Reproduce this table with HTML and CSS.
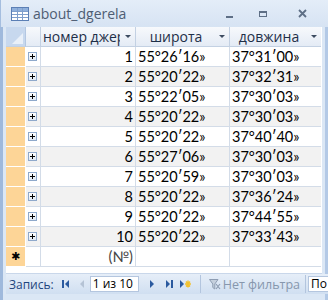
FILE: index.html
```html
<!DOCTYPE html>
<html>
<head>
<meta charset="utf-8">
<link rel="stylesheet" href="styles.css">
</head>
<body>
<div class="win">
  <div class="titlebar">
    <svg class="ticon" width="18" height="14" viewBox="0 0 18 14">
      <rect x="0.5" y="0.5" width="17" height="13" fill="#fff" stroke="#5b7fb5"/>
      <rect x="1" y="1" width="16" height="3" fill="#8fb0dc"/>
      <path d="M1 4.5H17M1 7.5H17M1 10.5H17M6.5 1V13M11.5 1V13" stroke="#7f9fcc" fill="none"/>
    </svg>
    <span class="title">about_dgerela</span>
    <div class="controls">
      <span class="ctl min"></span>
      <span class="ctl max"></span>
      <svg class="ctl-x" width="9" height="9" viewBox="0 0 9 9"><path d="M1 1L8 8M8 1L1 8" stroke="#5e6f86" stroke-width="1.8"/></svg>
    </div>
  </div>
  <div class="frame">
    <div class="grid">
      <div class="hcell selall"><span class="tri"></span></div>
      <div class="hcell hexp"></div>
      <div class="hcell col"><span class="htext left">номер джерела</span><span class="arr"></span></div>
      <div class="hcell col"><span class="htext">широта</span><span class="arr"></span></div>
      <div class="hcell col last"><span class="htext">довжина</span><span class="arr"></span></div>

      <div class="sel"></div><div class="exp"><span class="plus"></span></div><div class="num">1</div><div class="c">55°26′16»</div><div class="c last">37°31′00»</div>
      <div class="sel"></div><div class="exp alt"><span class="plus"></span></div><div class="num alt">2</div><div class="c alt">55°20′22»</div><div class="c alt last">37°32′31»</div>
      <div class="sel"></div><div class="exp"><span class="plus"></span></div><div class="num">3</div><div class="c">55°22′05»</div><div class="c last">37°30′03»</div>
      <div class="sel"></div><div class="exp alt"><span class="plus"></span></div><div class="num alt">4</div><div class="c alt">55°20′22»</div><div class="c alt last">37°30′03»</div>
      <div class="sel"></div><div class="exp"><span class="plus"></span></div><div class="num">5</div><div class="c">55°20′22»</div><div class="c last">37°40′40»</div>
      <div class="sel"></div><div class="exp alt"><span class="plus"></span></div><div class="num alt">6</div><div class="c alt">55°27′06»</div><div class="c alt last">37°30′03»</div>
      <div class="sel"></div><div class="exp"><span class="plus"></span></div><div class="num">7</div><div class="c">55°20′59»</div><div class="c last">37°30′03»</div>
      <div class="sel"></div><div class="exp alt"><span class="plus"></span></div><div class="num alt">8</div><div class="c alt">55°20′22»</div><div class="c alt last">37°36′24»</div>
      <div class="sel"></div><div class="exp"><span class="plus"></span></div><div class="num">9</div><div class="c">55°20′22»</div><div class="c last">37°44′55»</div>
      <div class="sel"></div><div class="exp alt"><span class="plus"></span></div><div class="num alt">10</div><div class="c alt">55°20′22»</div><div class="c alt last">37°33′43»</div>
      <div class="sel star">✱</div><div class="exp"></div><div class="num newrec">(№)</div><div class="c"></div><div class="c last"></div>
    </div>
    <div class="filler"></div>
    <div class="status">
      <span class="lbl">Запись:</span>
      <svg class="nav first" width="7" height="8" viewBox="0 0 7 8"><rect x="0" y="0" width="2" height="8" fill="#2b5a9f"/><path d="M7 0V8L3 4Z" fill="#2b5a9f"/></svg>
      <svg class="nav prev" width="4" height="8" viewBox="0 0 4 8"><path d="M4 0V8L0 4Z" fill="#b5c3d5"/></svg>
      <span class="pos">1 из 10</span>
      <svg class="nav next" width="4" height="8" viewBox="0 0 4 8"><path d="M0 0V8L4 4Z" fill="#2b5a9f"/></svg>
      <svg class="nav last" width="7" height="8" viewBox="0 0 7 8"><path d="M0 0V8L4 4Z" fill="#2b5a9f"/><rect x="5" y="0" width="2" height="8" fill="#2b5a9f"/></svg>
      <svg class="nav newr" width="11" height="8" viewBox="0 0 11 8"><path d="M0 0V8L4 4Z" fill="#2b5a9f"/><path d="M8 0.5V7.5M5 4H11M6 1.5L10 6.5M10 1.5L6 6.5" stroke="#f2c230" stroke-width="1.4"/></svg>
      <span class="sep"></span>
      <svg class="filt" width="12" height="11" viewBox="0 0 12 11"><path d="M0.5 0.5H9L5.8 5V10L3.8 8.5V5Z" fill="#c5d0dd" stroke="#8e9db2"/><path d="M7 5L11 10M11 5L7 10" stroke="#8e9db2" stroke-width="1.2"/></svg>
      <span class="nofilt">Нет фильтра</span>
      <span class="sep two"></span>
      <span class="search">По</span>
    </div>
  </div>
</div>
</body>
</html>
```

FILE: styles.css
```css
html, body {
  margin: 0;
  padding: 0;
  width: 328px;
  height: 300px;
  overflow: hidden;
  background: #fff;
}
.win {
  width: 328px;
  height: 300px;
  display: flex;
  flex-direction: column;
  background: #d7e4f3;
}
.titlebar {
  height: 27px;
  display: flex;
  align-items: center;
  background: linear-gradient(#e4edf8, #d6e3f3);
  border-left: 1px solid #a5bedf;
  box-sizing: border-box;
}
.ticon {
  margin-left: 10px;
  margin-top: 1px;
  flex: none;
}
.title {
  margin-left: 4px;
  font-family: "Open Sans", sans-serif;
  font-size: 14px;
  color: #4e5d73;
  white-space: nowrap;
}
.controls {
  margin-left: auto;
  display: flex;
  align-items: center;
  margin-right: 21px;
}
.ctl.min {
  width: 7px;
  height: 2px;
  background: #5e6f86;
  margin-top: 7px;
  margin-right: 26px;
}
.ctl.max {
  width: 8px;
  height: 6px;
  box-sizing: border-box;
  border: 1px solid #5e6f86;
  border-top-width: 2px;
  margin-right: 31px;
}
.frame {
  flex: 1;
  display: flex;
  flex-direction: column;
  padding: 0 6px 6px 6px;
  background: linear-gradient(90deg, #9fb9dc 0, #9fb9dc 3px, #dbe7f5 3px, #dbe7f5 325px, #b3c9e6 325px);
}
.grid {
  display: grid;
  grid-template-columns: 20px 15px 95px 94px 91px;
  grid-auto-rows: 20px;
  background: #fff;
  font-family: "Lato", "Liberation Sans", sans-serif;
  font-size: 14.5px;
  color: #000;
}
.grid > div {
  box-sizing: border-box;
  border-bottom: 1px solid #d3dce8;
  border-right: 1px solid #d3dce8;
  display: flex;
  align-items: center;
  white-space: nowrap;
  overflow: hidden;
}
.grid > div.last {
  border-right: none;
}
.hcell {
  background: linear-gradient(#f7f9fc, #e4ebf5);
  border-color: #c3d1e3 !important;
  font-family: "Open Sans", sans-serif;
  font-size: 14px;
  color: #1e2f48;
}
.hcell.selall {
  background: #c7d8ee;
  position: relative;
  border-right-color: #b3c7e2 !important;
}
.tri {
  position: absolute;
  right: 2px;
  bottom: 2px;
  width: 0;
  height: 0;
  border-left: 11px solid transparent;
  border-bottom: 11px solid #e9f0f9;
}
.hcell.col {
  padding: 0 4px 0 2px;
}
.htext {
  flex: 1;
  text-align: center;
  overflow: hidden;
  white-space: nowrap;
}
.htext.left {
  text-align: left;
  padding-left: 0;
}
.arr {
  width: 0;
  height: 0;
  border-left: 3px solid transparent;
  border-right: 3px solid transparent;
  border-top: 3px solid #3c4b60;
  margin-left: 5px;
  flex: none;
}
.sel {
  background: #fdd597;
  border-bottom-color: #fff !important;
  border-right-color: #ffffff !important;
}
.sel.star {
  justify-content: center;
  font-size: 11px;
  font-family: "DejaVu Sans", sans-serif;
}
.exp {
  justify-content: center;
}
.plus {
  width: 9px;
  height: 9px;
  box-sizing: border-box;
  border: 1px solid #8fa9cb;
  background: linear-gradient(#fff, #dfe8f3);
  position: relative;
  margin-left: -1px;
}
.plus::before {
  content: "";
  position: absolute;
  left: 1px;
  top: 3px;
  width: 5px;
  height: 1px;
  background: #000;
}
.plus::after {
  content: "";
  position: absolute;
  left: 3px;
  top: 1px;
  width: 1px;
  height: 5px;
  background: #000;
}
.num {
  justify-content: flex-end;
  padding-right: 2px;
}
.c {
  padding-left: 2px;
}
.alt {
  background: #f2f2f2;
}
.newrec {
  color: #444;
}
.filler {
  flex: 1;
  background: #fff;
  border-bottom: 1px solid #c9d7ea;
}
.status {
  height: 20px;
  display: flex;
  align-items: center;
  background: linear-gradient(#e6eef8, #d0dff1);
  font-family: "Open Sans", sans-serif;
  font-size: 12px;
  margin-right: -6px;
  white-space: nowrap;
  overflow: hidden;
}
.status > * {
  flex: none;
}
.lbl {
  color: #1f467e;
  margin-left: 3px;
}
.nav.first { margin-left: 8px; }
.nav.prev { margin-left: 11px; }
.pos {
  margin-left: 6px;
  width: 49px;
  height: 16px;
  box-sizing: border-box;
  background: #fff;
  border: 1px solid #b4c6df;
  line-height: 14px;
  padding-left: 2px;
  color: #000;
}
.nav.next { margin-left: 11px; }
.nav.last { margin-left: 12px; }
.nav.newr { margin-left: 7px; }
.sep {
  width: 1px;
  height: 18px;
  background: #b3c5de;
  margin-left: 9px;
}
.sep.two {
  margin-left: 5px;
}
.filt { margin-left: 8px; }
.nofilt {
  margin-left: 2px;
  font-size: 12.5px;
  color: #8797ad;
}
.search {
  margin-left: 2px;
  height: 16px;
  width: 26px;
  box-sizing: border-box;
  background: #fff;
  border: 1px solid #b4c6df;
  border-right: none;
  line-height: 14px;
  padding-left: 2px;
  color: #000;
}
```
